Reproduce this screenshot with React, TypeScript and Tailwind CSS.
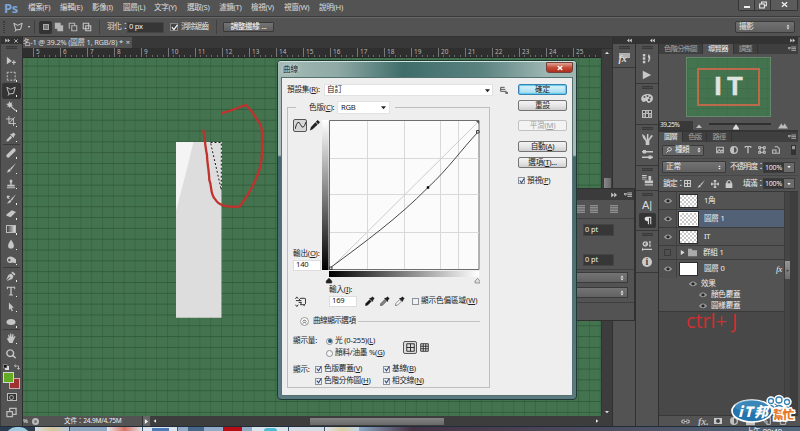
import React from "react";

type IconProps = { d: string; fill?: boolean; size?: number; box?: number; w?: number; className?: string };

function Icon({ d, fill = false, size = 11, box = 12, w = 1, className = "" }: IconProps) {
  return (
    <svg
      width={size}
      height={size}
      viewBox={`0 0 ${box} ${box}`}
      className={`block shrink-0 ${className}`}
      fill={fill ? "currentColor" : "none"}
      stroke={fill ? "none" : "currentColor"}
      strokeWidth={w}
    >
      <path d={d} />
    </svg>
  );
}

const menus: [string, string][] = [
  ["檔案(F)", "w-[32px]"],
  ["編輯(E)", "w-[32px]"],
  ["影像(I)", "w-[31px]"],
  ["圖層(L)", "w-[31px]"],
  ["文字(Y)", "w-[33px]"],
  ["選取(S)", "w-[32px]"],
  ["濾鏡(T)", "w-[32px]"],
  ["檢視(V)", "w-[33px]"],
  ["視窗(W)", "w-[35px]"],
  ["說明(H)", "w-[32px]"],
];

function MenuBar() {
  return (
    <div className="flex h-[17px] shrink-0 items-center border-b border-[#3a3a3a] bg-[#535353] text-[7.6px] tracking-[-0.3px] text-[#dedede]">
      <div className="w-[28px] pl-[4px] font-['Open_Sans'] text-[13px] leading-none font-bold tracking-[-0.5px] text-[#7ba6d4]">Ps</div>
      {menus.map(([m, w]) => (
        <div key={m} className={`${w} shrink-0`}>{m}</div>
      ))}
      <div className="mr-[2px] mb-[6px] ml-auto flex h-[11px] w-[60px] rounded-b-[2px] border border-t-0 border-[#353535] bg-[#5b5b5b] text-[#eeeeee]">
        <div className="flex w-[16px] items-center justify-center border-r border-[#353535]">
          <div className="mt-[4px] h-[2px] w-[6px] bg-[#eeeeee]" />
        </div>
        <div className="flex w-[16px] items-center justify-center border-r border-[#353535]">
          <Icon size={8} w={1.6} d="M4 4V1.5H11V7H8M1 4.5H8V10.5H1Z" />
        </div>
        <div className="flex flex-1 items-center justify-center">
          <Icon size={7} w={2.4} d="M1.5 2L10.5 10M10.5 2L1.5 10" />
        </div>
      </div>
    </div>
  );
}

const lassoPath = "M1 1.5L5.5 4L11 1.5L9 9L3.5 9.5ZM3.5 9.5L2.5 11.5";

function OptionsBar() {
  return (
    <div className="flex h-[20px] shrink-0 items-center border-t border-b border-t-[#686868] border-b-[#343434] bg-[#535353] text-[7.6px] tracking-[-0.3px] text-[#e4e4e4]">
      <div className="ml-[3px] h-[12px] w-[2px] border-x border-dotted border-[#3a3a3a]" />
      <Icon className="ml-[8px] text-[#cccccc]" size={10} w={1.2} d={lassoPath} />
      <div className="ml-[5px] border-x-[1.5px] border-t-[2px] border-x-transparent border-t-[#dddddd]" />
      <div className="ml-[4px] h-[14px] w-px bg-[#404040]" />
      <div className="ml-[4px] flex h-[13px] w-[13px] items-center justify-center rounded-[2px] bg-[#333333]">
        <div className="h-[6px] w-[6px] border border-[#aaaaaa] bg-[#777777]" />
      </div>
      <Icon className="ml-[2px] text-[#b5b5b5]" size={10} fill d="M1 1H8V4H11V11H4V8H1Z" />
      <Icon className="ml-[4px] text-[#b5b5b5]" size={10} d="M1.5 8V1.5H8V4M4.5 4.5H10.5V10.5H4.5Z" w={1.3} />
      <Icon className="ml-[4px] text-[#c5c5c5]" size={10} d="M1.5 1.5H8V8H1.5ZM4.5 4.5H10.5V10.5H4.5Z" w={1.3} />
      <div className="ml-[7px] h-[14px] w-px bg-[#404040]" />
      <div className="ml-[7px] w-[20px] shrink-0 whitespace-nowrap">羽化：</div>
      <div className="flex h-[11px] w-[37px] items-center border border-[#444444] bg-[#363636] pl-[1px] text-[#eeeeee]">0 px</div>
      <div className="ml-[6px] flex h-[8px] w-[8px] items-center justify-center border border-[#888888] bg-[#444444]">
        <Icon size={7} w={2} d="M1.5 5.5L5 9.5L11 1.5" className="text-white" />
      </div>
      <div className="ml-[3px] w-[29px] tracking-[-0.8px]">消除鋸齒</div>
      <div className="ml-[6px] h-[14px] w-px bg-[#404040]" />
      <div className="ml-[6px] flex h-[10px] w-[51px] items-center justify-center rounded-[1px] border border-[#393939] bg-linear-to-b from-[#757575] to-[#5c5c5c] text-white">
        調整邊緣 ...
      </div>
      <div className="mr-[5px] ml-auto flex h-[12px] w-[60px] items-center justify-between rounded-[2px] border border-[#393939] bg-linear-to-b from-[#717171] to-[#5f5f5f] px-[3px]">
        <span>攝影</span>
        <Icon size={6} fill d="M3 5L6 1L9 5ZM3 7L6 11L9 7Z" />
      </div>
    </div>
  );
}

const tools: { d: string; fill?: boolean; active?: boolean; gap?: boolean; h?: string }[] = [
  { d: "M1 1L7 6L1 10ZM7.5 7H8.7V5.5L9.3 4.8L10 5.5V7H11.5L12 7.6L11.5 8.3H10V10L9.3 10.7L8.7 10V8.3H7Z", fill: true },
  { d: "M1.5 3.5V1.5H3.5M5 1.5H7.5M9 1.5H11V3.5M11 5V7.5M11 9V11H9M7.5 11H5M3.5 11H1.5V9M1.5 7.5V5" },
  { d: lassoPath, active: true },
  { d: "M4 0L5 2.5L7.5 1.5L6.5 4L8.5 5L6.5 6L12 11L11 12L5.5 7L4 8.5L3.5 6.5L1 7L2.5 5L0 3.5L3 3Z", fill: true },
  { d: "M3.5 0V9H12M0 3.5H9V12M3.5 9L10.5 1.5" },
  { d: "M9 0.5L11.5 3L9.5 5L10 6L9 7L5 3L6 2L7 2.5ZM5.5 4.5L7.5 6.5L3 11L0.5 11.5L1 9Z", fill: true },
  { d: "M8.5 .5Q12-.5 11.5 3.5L3.5 11.5Q0 12 .5 8.5Z", fill: true, gap: true },
  { d: "M12 0L6.5 8L5 6.5ZM4.7 7L6 8.5C5 11 3 11.3 0.5 11.5C2.5 10 2.3 7.5 4.7 7Z", fill: true },
  { d: "M4.5 1H7.5V3.5L6.8 5V7H10.5V9H1.5V7H5.2V5L4.5 3.5ZM1 10H11V11H1Z", fill: true },
  { d: "M12 0L7 8L5.5 6.7ZM5.3 7.2L6.5 8.5C5.5 11 3 11.3 1 11.5C3 10 3 7.5 5.3 7.2ZM1 2H4L5 3L3 4L5 6L1 5Z", fill: true },
  { d: "M7 1.5L12 3.5L5.5 10L0.5 8V6.5Z", fill: true },
  { d: "" },
  { d: "M6 0.5C8 4 9.5 6 9.5 8A3.5 3.5 0 0 1 2.5 8C2.5 6 4 4 6 .5Z", fill: true },
  { d: "M1 5C2 2 5 1 8 2.5L12 5V10L8 9C4 10.5 1 9 1 5ZM4 4.5A1.5 1.5 0 1 0 4.1 4.5Z", fill: true },
  { d: "M8 0.5L11.5 4L9.8 5.5L6.5 2ZM6 3L9 6L7.5 9.5L1 12L5.2 7.5L4.5 6.8L.2 11L2.5 5Z", fill: true, gap: true },
  { d: "M1 1H11V3.8H10L9.5 2H6.8V10L8.5 10.5V11.3H3.5V10.5L5.2 10V2H2.5L2 3.8H1Z", fill: true },
  { d: "M3.5 0.5L9.5 7H6.8L8.3 10.5L6.8 11.2L5.3 7.7L3.5 9.5Z", fill: true },
  { d: "M6 2.3C9.5 2.3 11.5 4 11.5 6S9.5 9.7 6 9.7.5 8 .5 6 2.5 2.3 6 2.3Z", fill: true },
  { d: "M3 6L2.5 2L3.7 2L4.7 5L5 .5H6.3L6.7 5L8 1L9.2 1.4L8.6 5.5L10.5 3.5L11.5 4.3L9 9L8 12H4.2L1 7L2 6.3Z", fill: true, gap: true },
  { d: "M5 1A4 4 0 1 0 5.1 1M7.5 7L11.5 11", fill: false },
];

function PanelHeader({ glyph, className = "" }: { glyph: "left" | "right"; className?: string }) {
  return (
    <div className={`flex h-[7px] shrink-0 items-center justify-end bg-[#333333] pr-[3px] text-[#cccccc] ${className}`}>
      <Icon size={5} fill d={glyph === "left" ? "M5.5 1V11L0 6ZM11.5 1V11L6 6Z" : "M.5 1V11L6 6ZM6.5 1V11L12 6Z"} />
    </div>
  );
}

function Grip({ className = "" }: { className?: string }) {
  return <div className={`mx-auto h-[3px] w-[11px] shrink-0 border-y border-[#3a3a3a] bg-[#484848] ${className}`} />;
}

function Toolbar() {
  return (
    <div className="flex w-[23px] shrink-0 flex-col border-r border-l border-r-[#2e2e2e] border-l-[#3b3b3b] bg-[#535353] text-[#c6c6c6]">
      <div className="flex h-[7px] shrink-0 items-center justify-between bg-[#333333] px-[4px]">
        <Icon size={5} fill d="M.5 1V11L6 6ZM6.5 1V11L12 6Z" />
        <Icon size={4} w={2.5} d="M1 1L11 11M11 1L1 11" />
      </div>
      <Grip className="mt-[2px] mb-[4px]" />
      {tools.map((t, i) => (
        <React.Fragment key={i}>
          {t.gap && <div className="mx-[2px] mb-[0.5px] h-px shrink-0 bg-[#3a3a3a]" />}
          <div className={`mx-[1px] flex h-[15.2px] shrink-0 items-center justify-center rounded-[2px] ${t.active ? "bg-[#343434]" : ""}`}>
            {i === 11 ? (
              <div className="h-[8px] w-[10px] border border-[#bbbbbb] bg-linear-to-r from-[#444444] to-[#dddddd]" />
            ) : (
              <Icon d={t.d} fill={t.fill} size={10} w={i === 19 ? 1.7 : 1.1} />
            )}
            <div className={`mt-[10px] h-[1.5px] w-[1.5px] ${i === 0 || i === 19 ? "" : "bg-[#eeeeee]"}`} />
          </div>
        </React.Fragment>
      ))}
      <div className="flex h-[9px] shrink-0 items-center justify-between px-[2px] pt-[2px]">
        <svg width="6" height="6" viewBox="0 0 6 6"><path d="M2 2H6V6H2Z" fill="#ddd" /><path d="M.5.5H4V4H.5Z" fill="#111" stroke="#bbb" strokeWidth=".6" /></svg>
        <Icon size={6} d="M3 1L1 4L4 6M1 4H9V10M6.5 8L9 11L11.5 8" w={1.6} />
      </div>
      <div className="grid h-[20px] shrink-0 grid-cols-[2px_6px_5px_6px] grid-rows-[2px_6px_5px_6px]">
        <div className="col-[3/5] row-[3/5] border border-[#c8b0b0] bg-[#a13232]" />
        <div className="col-[2/4] row-[2/4] border border-[#d5d5d5] bg-[#65ab21]" />
      </div>
      <div className="mx-auto mt-[3px] flex h-[8px] w-[10px] shrink-0 items-center justify-center border border-[#bbbbbb] bg-[#383838]">
        <div className="h-[5px] w-[5px] rounded-full border border-[#aaaaaa]" />
      </div>
      <Icon className="mx-auto mt-[6px] text-[#bbbbbb]" size={11} d="M1 5H7V10.5H1ZM4 5V1.5H11V8H7" w={1.4} />
    </div>
  );
}

function DocumentTabs() {
  return (
    <div className="flex h-[11px] shrink-0 bg-[#383838]">
      <div className="flex w-[109px] items-center overflow-hidden bg-[#535353] text-[7.5px] tracking-[-0.22px] whitespace-nowrap text-[#dddddd]">
        <span>名-1 @ 39.2% (圖層 1, RGB/8) *</span>
        <span className="ml-[3px]">×</span>
      </div>
    </div>
  );
}

const rulerNumbers = Array.from({ length: 21 }, (_, i) => i + 5);

function Ruler() {
  return (
    <div className="flex h-[10px] shrink-0 overflow-hidden border-b border-[#252525] bg-[#2f2f2f] pl-[10px] text-[6.4px] leading-[8px] text-[#b5b5b5]">
      {rulerNumbers.map((n) => (
        <div key={n} className="flex h-full w-[27px] shrink-0 flex-col justify-between border-l border-[#777777] pl-[2px]">
          <span className="h-[7px]">{n}</span>
          <div className="flex h-[2px] justify-around pr-[2px]">
            {[0, 1, 2, 3].map((k) => <i key={k} className="h-full w-px bg-[#6a6a6a]" />)}
          </div>
        </div>
      ))}
    </div>
  );
}

function Artboard() {
  return (
    <div className="min-w-0 flex-1 overflow-hidden bg-[#44744f]">
      <svg width="578" height="358" viewBox="23 58 578 358" className="block">
        <defs>
          <pattern id="grid" x="26.3" y="65.6" width="10.82" height="10.82" patternUnits="userSpaceOnUse">
            <path d="M.5 0V10.82" stroke="#386642" strokeWidth=".9" />
            <path d="M0 .5H10.82" stroke="#305b3b" strokeWidth=".9" />
          </pattern>
        </defs>
        <path d="M23 58H601V416H23Z" fill="url(#grid)" />
        <path d="M176 142H221.5V317.7H176Z" fill="#dddddd" />
        <path d="M176 142H193.5Q185 178 176 211Z" fill="#f4f4f4" />
        <path d="M210.5 142.5H221.3V190Z" fill="none" stroke="#eeeeee" />
        <path d="M210.5 142.5H221.3V190Z" fill="none" stroke="#151515" strokeDasharray="2 2" />
        <path
          d="M203.3 130.5C205 138 205 146 207 155C207 162 209 170 209.3 180C212 186 210 194 215 199C219 206 226 207 239.3 206.7C246 198 250 192 254 183C260 171 262 163 262 150V133C262 126 260 124 256 118C252 111 249 108 246 105C238 107 233 111 222 113"
          fill="none"
          stroke="#c0322d"
          strokeWidth="2.3"
          strokeLinecap="round"
          strokeLinejoin="round"
        />
      </svg>
    </div>
  );
}

function StatusBar() {
  return (
    <div className="flex h-[10px] shrink-0 items-center bg-[#3d3d3d] text-[6.6px] tracking-[-0.2px] text-[#eeeeee]">
      <div className="flex h-full w-[120px] shrink-0 items-center border-r border-[#333333] bg-[#535353]">
        <span className="w-[9px] text-[6px]">%</span>
        <div className="h-[7px] w-[7px] rounded-full border-2 border-[#bbbbbb] bg-[#777777]" />
        <span className="ml-[25px] whitespace-nowrap">文件：24.9M/4.75M</span>
      </div>
      <div className="flex h-full w-[7px] items-center justify-center bg-[#666666]"><Icon size={5} fill d="M2 0L10 6L2 12Z" /></div>
      <Icon className="ml-[3px]" size={4} fill d="M9 1V11L2 6Z" />
      <div className="ml-[153px] h-[7px] w-[134px] shrink-0 bg-linear-to-b from-[#858585] to-[#686868]" />
      <Icon className="mr-[13px] ml-auto" size={4} fill d="M3 1V11L10 6Z" />
    </div>
  );
}

function DockButton({ children, className = "" }: { children: React.ReactNode; className?: string }) {
  return <div className={`mx-auto flex w-[17px] shrink-0 items-center justify-center rounded-[2px] text-[#c8c8c8] ${className}`}>{children}</div>;
}

function Docks() {
  return (
    <>
      <div className="flex w-[24px] shrink-0 flex-col border-x border-[#303030] bg-[#535353]">
        <PanelHeader glyph="left" />
        <Grip className="mt-[2px]" />
        <div className="flex h-[19px] shrink-0 items-center justify-center border-b border-[#383838]">
          <div className="flex h-[11px] w-[11px] items-end bg-linear-to-b from-[#b0b0b0] from-50% to-[#535353] to-50% font-['Liberation_Serif'] text-[10px] leading-[10px] font-bold text-[#dddddd] italic">fx</div>
        </div>
      </div>
      <div className="flex w-[23px] shrink-0 flex-col border-r border-[#303030] bg-[#535353]">
        <PanelHeader glyph="left" />
        <Grip className="mt-[2px]" />
        <DockButton className="mt-[3px] h-[14px]"><Icon fill size={10} d="M1 0H4V3H1ZM1 4H4V7H1ZM1 8H4V11H1ZM8 0Q12 4 8 10L7 9Q9 6 7 3Z" /></DockButton>
        <DockButton className="mt-[2px] h-[13px]"><Icon fill size={10} d="M1 1L11 6L1 11Z" /></DockButton>
        <div className="mt-[2px] mb-[2px] h-px shrink-0 bg-[#383838]" />
        <Grip />
        <DockButton className="mt-[2px] h-[15px]">
          <svg width="12" height="9" viewBox="0 0 12 9"><path d="M7 0C1 0-1 4 1 7C3 9 4 7 5 7S6 9 8 9C11 8 12 6 12 4S10 0 7 0" fill="#c8c8c8" /><g fill="#555"><circle cx="3.5" cy="3" r="1" /><circle cx="6.5" cy="2" r="1" /><circle cx="9" cy="3.5" r="1" /><circle cx="8" cy="6" r="1.2" /></g></svg>
        </DockButton>
        <DockButton className="h-[15px]">
          <div className="grid h-[8px] w-[10px] grid-cols-3 gap-px bg-[#bbbbbb] p-px">
            {[0, 1, 2, 3, 4, 5].map((i) => <i key={i} className={i % 2 ? "bg-[#888888]" : "bg-[#444444]"} />)}
          </div>
        </DockButton>
        <div className="mt-[3px] mb-[2px] h-px shrink-0 bg-[#383838]" />
        <Grip />
        <DockButton className="mt-[2px] h-[15px]"><Icon fill size={11} d="M0 0L3 2L5 7L5.5 0H7L7 6L10 1L12 2L8 7V12H4V8L1 4Z" /></DockButton>
        <DockButton className="h-[15px]"><Icon size={11} w={1.7} d="M0 3H12M0 9H12M2 1V5M3.5 1V5M8 7V11M9.5 7V11" /></DockButton>
        <div className="mt-[3px] mb-[2px] h-px shrink-0 bg-[#383838]" />
        <Grip />
        <DockButton className="mt-[3px] h-[13px]"><Icon fill size={11} d="M0 0H5V1H0ZM0 2H5V3H0ZM0 4H5V5H0ZM7 1H10V5L9 6H12V9H3V6H8L7 5ZM3 10H12V11.5H3Z" /></DockButton>
        <div className="mt-[3px] mb-[2px] h-px shrink-0 bg-[#383838]" />
        <Grip />
        <DockButton className="mt-[2px] h-[14px] font-['Liberation_Sans'] text-[11px] text-[#dddddd]">A|</DockButton>
        <DockButton className="mt-[1px] h-[15px] bg-[#343434] text-[#dddddd]"><Icon fill size={9} d="M5 1H11V11H9.7V2.5H8V11H6.5V7C1 7 1 1 5 1Z" /></DockButton>
        <div className="mt-[2px] mb-[2px] h-px shrink-0 bg-[#383838]" />
        <Grip />
        <DockButton className="mt-[3px] h-[14px]"><Icon size={10} w={1.7} d="M4 1A2.5 2.5 0 1 0 4.1 1M4 3.5H7M9.5 0V3M9.5 4V7M0 10H12M0 8V12" /></DockButton>
        <DockButton className="h-[18px]">
          <div className="flex h-[10px] w-[10px] items-center justify-center rounded-full bg-[#cccccc] font-['Liberation_Serif'] text-[10px] leading-none font-bold text-[#444444]">i</div>
        </DockButton>
        <div className="mt-[1px] h-px shrink-0 bg-[#383838]" />
      </div>
    </>
  );
}

function PanelTabs({ tabs, active }: { tabs: string[]; active: number }) {
  return (
    <div className="flex h-[10px] shrink-0 bg-[#3f3f3f] text-[7.4px] tracking-[-0.8px] text-[#a4a4a4]">
      {tabs.map((t, i) => (
        <div key={t} className={`flex items-center border-r border-[#333333] px-[5px] whitespace-nowrap ${i === active ? "bg-[#535353] text-[#f0f0f0]" : ""}`}>{t}</div>
      ))}
      <Icon className="mt-[1px] mr-[2px] ml-auto text-[#bbbbbb]" size={8} w={1.3} d="M0 4H4L2 6.5ZM5 3H12M5 5.5H12M5 8H12" />
    </div>
  );
}

function Navigator() {
  return (
    <>
      <PanelTabs tabs={["色階分佈圖", "導覽器", "調整"]} active={1} />
      <div className="flex h-[67px] shrink-0 justify-center pt-[3px]">
        <div className="flex h-[60px] w-[85px] items-center justify-center border border-[#648a6b] bg-[#44744f] bg-[linear-gradient(#3e6d49_1px,transparent_1px),linear-gradient(90deg,#406f4a_1px,transparent_1px)] bg-size-[10px_10px]">
          <div className="flex h-[38px] w-[63px] items-center justify-center border-2 border-[#bd694c] pb-[1px] pl-[6px] font-['Liberation_Sans'] text-[25px] leading-none font-bold tracking-[6px] text-[#e0e4df] [-webkit-text-stroke:0.7px_#e0e4df]">IT</div>
        </div>
      </div>
      <div className="flex h-[9px] shrink-0 items-center text-[#bbbbbb]">
        <div className="flex h-full w-[34px] items-center bg-[#393939] pl-[1px] text-[6.5px] tracking-[-0.4px] text-[#eeeeee]">39.25%</div>
        <Icon className="ml-[3px]" size={6} fill d="M0 10L6 3L12 10Z" />
        <div className="mx-[7px] flex h-[6px] w-[62px] items-start justify-center border-t-2 border-[#303030] pr-[8px]">
          <Icon size={6} fill className="-mt-[1px] text-[#dddddd]" d="M0 9L6 0L12 9V11H0Z" />
        </div>
        <Icon size={10} fill d="M0 9L4 3L6 6L8 3L12 9Z" />
      </div>
    </>
  );
}

function Eye() {
  return (
    <svg width="8" height="6" viewBox="0 0 8 6" className="block shrink-0">
      <path d="M.4 3Q4-1 7.6 3Q4 6.5 .4 3Z" fill="#777777" stroke="#b5b5b5" strokeWidth=".9" />
      <circle cx="4" cy="3" r="1.4" fill="#252525" />
    </svg>
  );
}

function LayerRow({ name, kind, selected = false, h }: { name: string; kind: "checker" | "white" | "group"; selected?: boolean; h: string }) {
  return (
    <div className={`flex shrink-0 items-center border-b border-[#3c3c3c] ${h} ${selected ? "bg-[#526175]" : ""}`}>
      <div className="flex h-full w-[18px] shrink-0 items-center justify-center border-r border-[#404040] bg-[#505050]">
        {kind === "group" ? <div className="h-[7px] w-[7px] border border-[#3b3b3b]" /> : <Eye />}
      </div>
      {kind === "group" ? (
        <div className="flex w-[26px] items-center pl-[3px] text-[#dddddd]">
          <Icon size={5} fill d="M2 0L11 6L2 12Z" />
          <Icon className="ml-[3px] text-[#aaaaaa]" size={9} fill d="M0 1H5L6 3H12V11H0Z" />
        </div>
      ) : (
        <div className={`ml-[2px] h-[14px] w-[19px] border ${selected ? "border-white outline outline-[#292929]" : "border-[#2d2d2d]"} ${kind === "checker" ? "bg-white bg-[conic-gradient(#c9c9c9_25%,white_0_50%,#c9c9c9_0_75%,white_0)] bg-size-[4px_4px]" : "bg-white"}`} />
      )}
      <span className={kind === "group" ? "pl-0" : "pl-[6px]"}>{name}</span>
      {kind === "white" && <span className="mr-[2px] ml-auto font-['Liberation_Serif'] text-[9px] italic">fx</span>}
    </div>
  );
}

function Percent() {
  return (
    <div className="mr-[3px] ml-[1px] flex h-[11px] shrink-0 items-center border border-[#3b3b3b] bg-[#373737] text-[#f0f0f0]">
      <span className="w-[20px] pl-[1px] text-[7px] tracking-[-0.2px]">100%</span>
      <div className="flex h-full w-[10px] items-center justify-center bg-[#6b6b6b]"><Icon size={4} fill d="M1 3H11L6 10Z" /></div>
    </div>
  );
}

function Layers() {
  return (
    <div className="flex min-h-0 flex-1 flex-col border-t-2 border-[#353535]">
      <PanelTabs tabs={["圖層", "色版", "路徑"]} active={0} />
      <div className="flex h-[16px] shrink-0 items-center pl-[3px] text-[7.6px] text-[#eeeeee]">
        <div className="flex h-[11px] w-[42px] items-center rounded-[1px] border border-[#3a3a3a] bg-[#656565] pl-[3px]">
          <Icon size={6} d="M7 1A3.5 3.5 0 1 0 7.1 1M5 7L1 11" w={1.8} />
          <span className="ml-[3px] tracking-[-0.6px]">種類</span>
          <Icon className="mr-[1px] ml-auto" size={6} fill d="M3 5L6 1L9 5ZM3 7L6 11L9 7Z" />
        </div>
        <div className="ml-[12px] flex gap-[6px] text-[#c0c0c0]">
          <Icon size={8} w={1.6} d="M1 2H11V10H1ZM2 9L5 5L7 8L9 6L11 9" />
          <Icon size={8} fill d="M6 0A6 6 0 1 0 6 12A6 6 0 0 0 6 0ZM6 2A4 4 0 0 1 6 10Z" />
          <Icon size={8} fill d="M1 0H11V3H10L9 1.5H7V11H5V1.5H3L2 3H1Z" />
          <Icon size={8} w={1.5} d="M3 2.5H9V9.5H3ZM1 1H4V4H1ZM8 1H11V4H8ZM1 8H4V11H1ZM8 8H11V11H8Z" />
          <Icon size={8} w={1.6} d="M4 1H8L11 4V11H7M1 6H6V11H1Z" />
        </div>
        <div className="mr-[2px] ml-auto h-[10px] w-[5px] border border-[#333333] bg-linear-to-b from-[#999999] from-40% to-[#333333] to-45%" />
      </div>
      <div className="flex h-[17px] shrink-0 items-center border-t border-[#474747] pl-[3px] text-[7.6px] text-[#eeeeee]">
        <div className="flex h-[12px] w-[64px] shrink-0 items-center justify-between rounded-[1px] border border-[#3a3a3a] bg-linear-to-b from-[#737373] to-[#606060] px-[3px]">
          正常<Icon size={5} fill d="M3 5L6 1L9 5ZM3 7L6 11L9 7Z" />
        </div>
        <span className="ml-auto w-[32px] tracking-[-0.8px] whitespace-nowrap">不透明度：</span>
        <Percent />
      </div>
      <div className="flex h-[16px] shrink-0 items-center border-t border-[#474747] pl-[4px] text-[7.6px] text-[#eeeeee]">
        <span className="w-[21px] tracking-[-0.6px] whitespace-nowrap">鎖定：</span>
        <div className="flex gap-[6px] text-[#cccccc]">
          <Icon size={7} w={1.8} d="M1 1H11V11H1ZM1 6H11M6 1V11" />
          <Icon size={8} fill d={tools[7].d} />
          <Icon size={8} w={1.6} d="M6 0V12M0 6H12M4 2L6 0L8 2M4 10L6 12L8 10M2 4L0 6L2 8M10 4L12 6L10 8" />
          <Icon size={8} fill d="M2 5V3Q6-3 10 3V5H11V12H1V5ZM4 5H8V3Q6 0 4 3Z" />
        </div>
        <span className="ml-auto w-[19px] tracking-[-0.6px] whitespace-nowrap">填滿：</span>
        <Percent />
      </div>
      <div className="flex min-h-0 flex-1 border-t border-[#373737] bg-[#484848]">
        <div className="flex w-[125px] shrink-0 flex-col text-[7.6px] tracking-[-0.25px] text-[#eeeeee]">
          <div className="flex flex-col border-b border-[#393939] bg-[#535353]">
            <LayerRow name="1角" kind="checker" h="h-[18px]" />
            <LayerRow name="圖層 1" kind="checker" h="h-[18px]" selected />
            <LayerRow name="IT" kind="checker" h="h-[18px]" />
            <LayerRow name="群組 1" kind="group" h="h-[14px]" />
            <div className="[&>div]:border-b-0"><LayerRow name="圖層 0" kind="white" h="h-[18px]" /></div>
            <div className="flex h-[11px] items-center gap-[4px] pl-[30px]"><Eye />效果</div>
            <div className="flex h-[11px] items-center gap-[4px] pl-[40px]"><Eye />顏色覆蓋</div>
            <div className="flex h-[11px] items-center gap-[4px] pl-[40px]"><Eye />圖樣覆蓋</div>
          </div>
          <div className="pl-[27px] font-['Open_Sans'] text-[20px] leading-[17px] tracking-[-0.1px] whitespace-nowrap text-[#cd3030]">ctrl+ J</div>
        </div>
        <div className="w-[7px] border-x border-[#3d3d3d] bg-[#454545] pt-[69px]">
          <div className="flex h-[18px] items-center justify-center bg-linear-to-b from-[#969696] to-[#6d6d6d]"><Icon size={3} fill d="M0 9L6 2L12 9Z" className="text-[#333333]" /></div>
        </div>
        <div className="flex-1 bg-[#3e3e3e]" />
      </div>
      <div className="flex h-[11px] shrink-0 items-center gap-[8px] border-t border-[#383838] bg-[#535353] pl-[22px] text-[#c0c0c0]">
        <Icon size={9} w={1.5} d="M5 4H3A2 2 0 0 0 3 8H5M7 4H9A2 2 0 0 1 9 8H7M4 6H8" />
        <span className="font-['Liberation_Serif'] text-[10px] leading-[9px] font-bold italic">fx.</span>
        <div className="-ml-[3px] flex h-[6px] w-[8px] items-center justify-center bg-[#c8c8c8]"><i className="h-[4px] w-[4px] rounded-full bg-[#444444]" /></div>
        <Icon size={8} fill d="M6 0A6 6 0 1 0 6 12A6 6 0 0 0 6 0ZM6 2A4 4 0 0 1 6 10Z" />
        <Icon size={9} fill d="M0 1H5L6 3H12V11H0Z" />
        <Icon size={8} w={1.5} d="M1 1H11V11H6L1 6ZM1 6H6V11" />
        <Icon size={8} w={1.5} d="M2 3H10V11H2ZM1 2H11M5 0H7" />
      </div>
    </div>
  );
}

function ParagraphPanel() {
  const field = "ml-[2px] flex h-[12px] w-[31px] items-center border border-[#444444] bg-[#373737] pl-[1px]";
  return (
    <div className="absolute top-[188px] left-[570px] z-10 flex h-[133px] w-[65px] flex-col border border-[#303030] bg-[#535353] text-[7.3px] text-[#eeeeee]">
      <div className="flex h-[11px] shrink-0 items-center justify-end gap-[7px] bg-[#3b3b3b] pr-[2px] text-[#cccccc]">
        <Icon size={6} fill d="M.5 1V11L6 6ZM6.5 1V11L12 6Z" />
        <Icon size={8} w={1.3} d="M0 4H4L2 6.5ZM5 3H12M5 5.5H12M5 8H12" />
      </div>
      <div className="flex h-[18px] shrink-0 items-center pl-[6px] text-[#999999]">
        <Icon size={8} w={1.5} d="M0 1H12M0 3.5H12M0 6H12M0 8.5H12M0 11H12" />
        <Icon className="ml-[5px]" size={8} w={1.5} d="M0 1H12M0 3.5H12M0 6H12M0 8.5H12M0 11H12" />
        <Icon className="ml-[12px]" size={8} w={1.5} d="M0 1H12M0 3.5H12M0 6H12M0 8.5H12M0 11H12" />
      </div>
      <div className="flex h-[34px] shrink-0 items-start border-t border-[#404040] pt-[5px] pl-[10px]"><div className={field}>0 pt</div></div>
      <div className="flex h-[18px] shrink-0 items-start border-b border-[#404040] pt-[2px] pl-[10px]"><div className={field}>0 pt</div></div>
      <div className="flex flex-col gap-[4px] border-b border-[#404040] pt-[2px] pr-[6px] pb-[4px]">
        {[0, 1].map((i) => (
          <div key={i} className="flex h-[11px] items-center justify-end border border-[#3a3a3a] bg-linear-to-b from-[#747474] to-[#626262] pr-[2px]">
            <Icon size={6} fill d="M3 5L6 1L9 5ZM3 7L6 11L9 7Z" />
          </div>
        ))}
      </div>
    </div>
  );
}

/* Label with an underlined access key, as in Windows dialogs. */
function Key({ text, k, colon = false }: { text: string; k: string; colon?: boolean }) {
  return <span className="whitespace-nowrap">{text}(<u>{k}</u>){colon ? ":" : ""}</span>;
}

function Check({ on = true }: { on?: boolean }) {
  return (
    <div className="flex h-[7px] w-[7px] shrink-0 items-center justify-center border border-[#8d929a] bg-[#eef2f7]">
      {on && <Icon size={6} w={2.2} d="M1.5 5L5 9.5L10.5 1" className="text-[#31437c]" />}
    </div>
  );
}

function Radio({ on = false }: { on?: boolean }) {
  return (
    <div className="flex h-[7px] w-[7px] shrink-0 items-center justify-center rounded-full border border-[#8b8f94] bg-[#f5f5f5]">
      {on && <i className="h-[4px] w-[4px] rounded-full bg-[#245e84]" />}
    </div>
  );
}

function DialogButton({ children, className = "" }: { children: React.ReactNode; className?: string }) {
  return (
    <div className={`flex h-[11px] w-[49px] shrink-0 items-center justify-center rounded-[2px] border ${className}`}>{children}</div>
  );
}

const normalBtn = "border-[#747474] bg-linear-to-b from-[#f3f3f3] via-[#e6e6e6] to-[#cfcfcf]";

function CurveGraph() {
  return (
    <svg width="158" height="166" viewBox="322 119 158 166" className="block shrink-0">
      <defs>
        <linearGradient id="out" x1="0" y1="0" x2="0" y2="1"><stop stopColor="#fff" /><stop offset="1" stopColor="#000" /></linearGradient>
        <linearGradient id="in" x1="0" y1="0" x2="1" y2="0"><stop stopColor="#000" /><stop offset="1" stopColor="#fff" /></linearGradient>
      </defs>
      <path d="M322 120H328.5V270H322Z" fill="url(#out)" />
      <path d="M329.5 120.5H479V269.5H329.5Z" fill="#fbfbfb" stroke="#6e6e6e" />
      <path d="M367.5 121V269M404.5 121V269M440.5 121V269M458.5 121V269M330 158.5H479M330 194.5H479M330 232.5H479" stroke="#d9d9d9" />
      <path d="M330 269L479 121" stroke="#cccccc" />
      <path d="M330 268C365 242 398 218 428 187.5C448 169 462 149 478 132" fill="none" stroke="#333333" strokeWidth=".9" />
      <path d="M426.8 186.3H429.2V188.7H426.8Z" fill="#000" />
      <path d="M329.5 267H332V269.5H329.5ZM476.5 130.5H479V133H476.5Z" fill="#ddd" stroke="#222" strokeWidth=".8" />
      <path d="M476 121H479V124Z" fill="#555" />
      <path d="M329 271H479V277H329Z" fill="url(#in)" />
      <path d="M326.3 283V281L329 278.3L331.7 281V283Z" fill="#222" stroke="#222" strokeWidth=".7" />
      <path d="M475 283V281L477.7 278.3L480 281V283Z" fill="#ddd" stroke="#777" strokeWidth=".7" />
    </svg>
  );
}

function Dropper({ tip }: { tip: string }) {
  return (
    <svg width="10" height="10" viewBox="0 0 12 12" className="block shrink-0">
      <path d="M9 0.5L11.5 3L9.5 5L10 6L9 7L5 3L6 2L7 2.5Z" fill="#222" />
      <path d="M5.5 4.5L7.5 6.5L3 11L0.5 11.5L1 9Z" fill={tip} stroke="#333" strokeWidth=".7" />
    </svg>
  );
}

function CurvesDialog() {
  return (
    <div className="absolute top-[60px] left-[277px] z-20 flex h-[340px] w-[300px] flex-col rounded-[4px] border border-[#1f3937] bg-[linear-gradient(180deg,#a0b7b3_0px,#a7bbb8_94px,#45686c_96px,#5b7b80_100%)] p-[3px] pt-0 font-['Noto_Sans','Noto_Sans_CJK_TC',sans-serif] text-[7.6px] leading-none tracking-[-0.2px] text-[#222222]">
      <div className="-mx-[3px] flex h-[16px] shrink-0 items-center rounded-t-[3px] border-t border-[#d1e5df] bg-[linear-gradient(90deg,#a5bab5,#8fa9a5_20%,#3f6d6a_42%,#5a827f_68%,#9db6b2_90%)] pl-[3px]">
        <span className="rounded-full px-[2px] [text-shadow:0_0_4px_#ffffff]">曲線</span>
        <div className="mr-[3px] mb-[4px] ml-auto flex h-[11px] w-[27px] items-center justify-center rounded-b-[3px] border border-[#73413b] bg-linear-to-b from-[#e0a295] via-[#c54d39] via-50% to-[#ad2d1c] text-white">
          <Icon size={6} w={3} d="M1.5 2L10.5 10M10.5 2L1.5 10" />
        </div>
      </div>
      <div className="flex min-h-0 flex-1 border border-[#567270] bg-[#eeeeee]">
        <div className="flex w-[233px] shrink-0 flex-col pl-[5px]">
          <div className="mt-[6px] flex h-[12px] shrink-0 items-center">
            <div className="w-[37px]"><Key text="預設集" k="R" colon /></div>
            <div className="flex h-full w-[169px] items-center justify-between border border-[#e2e2e2] bg-white px-[2px]">自訂<Icon size={5} fill d="M0 3H12L6 10Z" /></div>
            <Icon className="ml-[7px]" size={8} w={1.1} d="M1 2H7M1 5H8M3 8H10M1 2V8H3M8 10H12L10 12Z" />
          </div>
          <div className="mt-[5px] flex h-[13px] shrink-0 items-center">
            <div className="h-px w-[9px] bg-[#bdbdbd]" />
            <div className="ml-[13px] w-[28px]"><Key text="色版" k="C" colon /></div>
            <div className="flex h-full w-[53px] items-center justify-between border border-[#e2e2e2] bg-white px-[3px]">RGB<Icon size={5} fill d="M0 3H12L6 10Z" /></div>
            <div className="ml-[5px] h-px w-[95px] bg-[#bdbdbd]" />
          </div>
          <div className="-mt-[7px] flex h-[281px] w-[203px] shrink-0 flex-col border border-t-0 border-[#bdbdbd] pl-[4px]">
            <div className="mt-[12px] flex h-[166px] shrink-0">
              <div className="flex w-[30px] flex-col pl-px">
                <div className="flex items-center gap-[2px]">
                  <div className="flex h-[13px] w-[14px] items-center justify-center rounded-[2px] border border-[#555555] bg-[#d7d7d7]"><Icon size={11} d="M0 10Q3-2 6 5Q9 12 12 2" /></div>
                  <Icon size={11} fill d="M9.5 0L12 2.5L10 4.5L7.5 2ZM7 2.5L9.5 5L4 10L1 11.5L2 8Z" />
                </div>
                <div className="mt-[118px]"><Key text="輸出" k="O" colon /></div>
                <div className="mt-[2px] flex h-[11px] w-[28px] items-center border border-[#dddddd] bg-white pl-[2px]">140</div>
              </div>
              <CurveGraph />
            </div>
            <div className="flex h-[9px] shrink-0 items-center pl-[37px]"><Key text="輸入" k="I" colon /></div>
            <div className="mt-[1px] flex h-[12px] shrink-0 items-center">
              <Icon className="ml-[3px]" size={11} w={1} d="M.5 3L2 1L3.5 3M.5 9.5L2 11.5L3.5 9.5M4 5H1M4 5L6 2.5H10L11.5 3V8.5L10 9.5V11M4 5H7M4 7H7L6 9.5H10" />
              <div className="ml-[23px] flex h-[11px] w-[28px] items-center border border-[#dddddd] bg-white pl-[2px]">169</div>
              <div className="ml-[8px] flex gap-[5px]"><Dropper tip="#111111" /><Dropper tip="#888888" /><Dropper tip="#ffffff" /></div>
              <div className="ml-[7px] flex items-center gap-[2px] tracking-[-0.1px]"><Check on={false} /><Key text="顯示色偏區域" k="W" /></div>
            </div>
            <div className="mt-[9px] flex h-[10px] shrink-0 items-center pl-[8px]">
              <div className="flex h-[9px] w-[9px] items-center justify-center rounded-full border border-[#999999] bg-white"><Icon size={5} w={1.8} d="M2 6L6 2L10 6M2 11L6 7L10 11" /></div>
              <span className="ml-[4px] w-[45px] tracking-[-0.5px]">曲線顯示選項</span>
              <div className="h-px w-[122px] bg-[#c2c2c2]" />
            </div>
            <div className="mt-[9px] flex h-[25px] shrink-0 pl-px">
              <div className="w-[33px] pt-[2px]">顯示量:</div>
              <div className="flex w-[75px] flex-col">
                <div className="flex h-[12px] items-center gap-[2px]"><Radio on /><Key text="光 (0-255)" k="L" /></div>
                <div className="flex h-[12px] items-center gap-[2px]"><Radio /><Key text="顏料/油墨 %" k="G" /></div>
              </div>
              <div className="ml-[2px] flex items-center gap-[3px]">
                <div className="flex h-[13px] w-[14px] items-center justify-center rounded-[2px] border border-[#555555] bg-[#dddddd]"><Icon size={9} w={1.2} d="M1 1H11V11H1ZM6 1V11M1 6H11" /></div>
                <Icon size={9} w={1.2} d="M1 1H11V11H1ZM4.3 1V11M7.7 1V11M1 4.3H11M1 7.7H11" />
              </div>
            </div>
            <div className="mt-[3px] flex shrink-0 pl-px">
              <div className="w-[22px] pt-[3px]">顯示:</div>
              <div className="w-[68px]">
                <div className="flex h-[12px] items-center gap-[2px]"><Check /><Key text="色版覆蓋" k="V" /></div>
                <div className="flex h-[12px] items-center gap-[2px]"><Check /><Key text="色階分佈圖" k="H" /></div>
              </div>
              <div>
                <div className="flex h-[12px] items-center gap-[2px]"><Check /><Key text="基線" k="B" /></div>
                <div className="flex h-[12px] items-center gap-[2px]"><Check /><Key text="相交線" k="N" /></div>
              </div>
            </div>
          </div>
        </div>
        <div className="flex flex-col pt-[6px] pl-[3px]">
          <DialogButton className="border-[#3c7fb1] bg-linear-to-b from-[#e0f5fc] to-[#9fd9ef] shadow-[inset_0_0_1px_1px_#58ccea]">確定</DialogButton>
          <DialogButton className={`mt-[5px] ${normalBtn}`}>重設</DialogButton>
          <DialogButton className="mt-[9px] border-[#c1c1c1] bg-[#f3f3f3] text-[#a1a1a1]"><Key text="平滑" k="M" /></DialogButton>
          <DialogButton className={`mt-[10px] ${normalBtn}`}><Key text="自動" k="A" /></DialogButton>
          <DialogButton className={`mt-[5px] ${normalBtn}`}><span>選項(<u>T</u>)...</span></DialogButton>
          <div className="mt-[9px] flex items-center gap-[2px]"><Check /><Key text="預視" k="P" /></div>
        </div>
      </div>
    </div>
  );
}

function Taskbar() {
  return (
    <div className="flex h-[5px] shrink-0 items-start overflow-hidden border-t border-[#222c38] bg-[#53677e]">
      <div className="flex h-full w-[35px] shrink-0 justify-center bg-[#2c3d50]"><div className="h-[20px] w-[24px] rounded-full bg-[#9ecbe0]" /></div>
      <div className="h-full w-[34px] bg-linear-to-r from-[#d5dce3] via-[#d7c69c] to-[#bac9dc]" />
      <div className="h-full w-[38px] border-l border-[#3f556e] bg-[#91a8c3]" />
      <div className="h-full w-[35px] bg-linear-to-r from-[#e5e9f0] via-[#d87466] to-[#dde4ed]" />
      <div className="flex h-full w-[35px] justify-center border-l border-[#3f556e] bg-[#dce4ed] pt-px"><i className="h-full w-[17px] bg-[#4e7cb8]" /></div>
      <div className="flex h-full w-[75px] border-l border-[#3f556e] bg-[#92abc8]"><i className="ml-[10px] h-full w-[16px] bg-[#456789]" /><i className="ml-[19px] h-full w-[19px] bg-[#b70d16]" /></div>
      <div className="flex h-full w-[36px] justify-center bg-[#d8e5ed] pt-px"><i className="h-full w-[13px] rounded-t-full bg-[#50bad2]" /></div>
      <div className="h-full w-[36px] border-l border-[#3f556e] bg-[#d2dce6]" />
      <div className="h-full w-[35px] border-l border-[#3f556e] bg-linear-to-r from-[#dbe4ec] via-[#d9cda7] to-[#c5d8e8]" />
      <div className="flex h-full flex-1 justify-end bg-linear-to-r from-[#8ba8c6] via-[#443445] via-12% to-[#51677c] pt-px pr-[18px] text-[7.5px] leading-[7px] text-white">上午 09:40</div>
    </div>
  );
}

function Watermark() {
  return (
    <svg width="67" height="38" viewBox="730 393 67 38" className="absolute top-[393px] left-[730px] z-30 font-['Noto_Sans_CJK_TC',sans-serif]">
      <g fill="#b4d4ea" stroke="#ffffff" strokeWidth="3.5">
        <circle cx="771" cy="401" r="3" /><circle cx="779" cy="400" r="3.5" /><circle cx="787" cy="402" r="3" />
        <path d="M765 410Q771 402 777 408Q783 402 792 411Z" />
      </g>
      <g fill="#ffffff" stroke="#3681b5" strokeWidth="1.3">
        <circle cx="771" cy="401" r="2.5" /><path d="M766 409Q771 402 775 409" />
        <circle cx="787" cy="402" r="2.5" /><path d="M783 410Q788 404 792 411" />
        <circle cx="779" cy="400" r="3" /><path d="M773 410Q779 401 785 410" />
      </g>
      <ellipse cx="752" cy="411" rx="20" ry="11" fill="#2475ad" stroke="#ffffff" strokeWidth="1.7" />
      <ellipse cx="751" cy="406" rx="16" ry="6" fill="#4991bf" opacity=".6" />
      <text x="738" y="416.5" fontSize="14" fontWeight="900" fontStyle="italic" fill="white" textLength="30">iT邦</text>
      <text x="773" y="419" fontSize="11.5" fontWeight="900" fill="#e27728" stroke="#ffffff" strokeWidth="3" paintOrder="stroke" textLength="21">幫忙</text>
    </svg>
  );
}

export default function App() {
  return (
    <div className="relative flex h-[431px] w-[800px] flex-col overflow-hidden bg-[#535353] font-['Noto_Sans','Noto_Sans_CJK_TC',sans-serif] leading-none">
      <MenuBar />
      <OptionsBar />
      <div className="flex min-h-0 flex-1">
        <Toolbar />
        <div className="flex w-[589px] shrink-0 flex-col">
          <DocumentTabs />
          <Ruler />
          <div className="flex min-h-0 flex-1">
            <Artboard />
            <div className="-mt-[9px] flex w-[11px] shrink-0 flex-col items-center border-l border-[#333333] bg-[#3d3d3d] pt-[2px] text-[#dddddd]">
              <Icon size={4} fill d="M0 9L6 2L12 9Z" />
              <div className="mt-[123px] mb-auto h-[120px] w-[7px] bg-linear-to-r from-[#888888] to-[#686868]" />
              <Icon className="mb-[2px]" size={4} fill d="M0 3H12L6 10Z" />
            </div>
          </div>
          <StatusBar />
        </div>
        <Docks />
        <div className="flex w-[139px] shrink-0 flex-col bg-[#535353]">
          <PanelHeader glyph="right" />
          <Navigator />
          <Layers />
        </div>
      </div>
      <Taskbar />
      <ParagraphPanel />
      <CurvesDialog />
      <Watermark />
    </div>
  );
}
